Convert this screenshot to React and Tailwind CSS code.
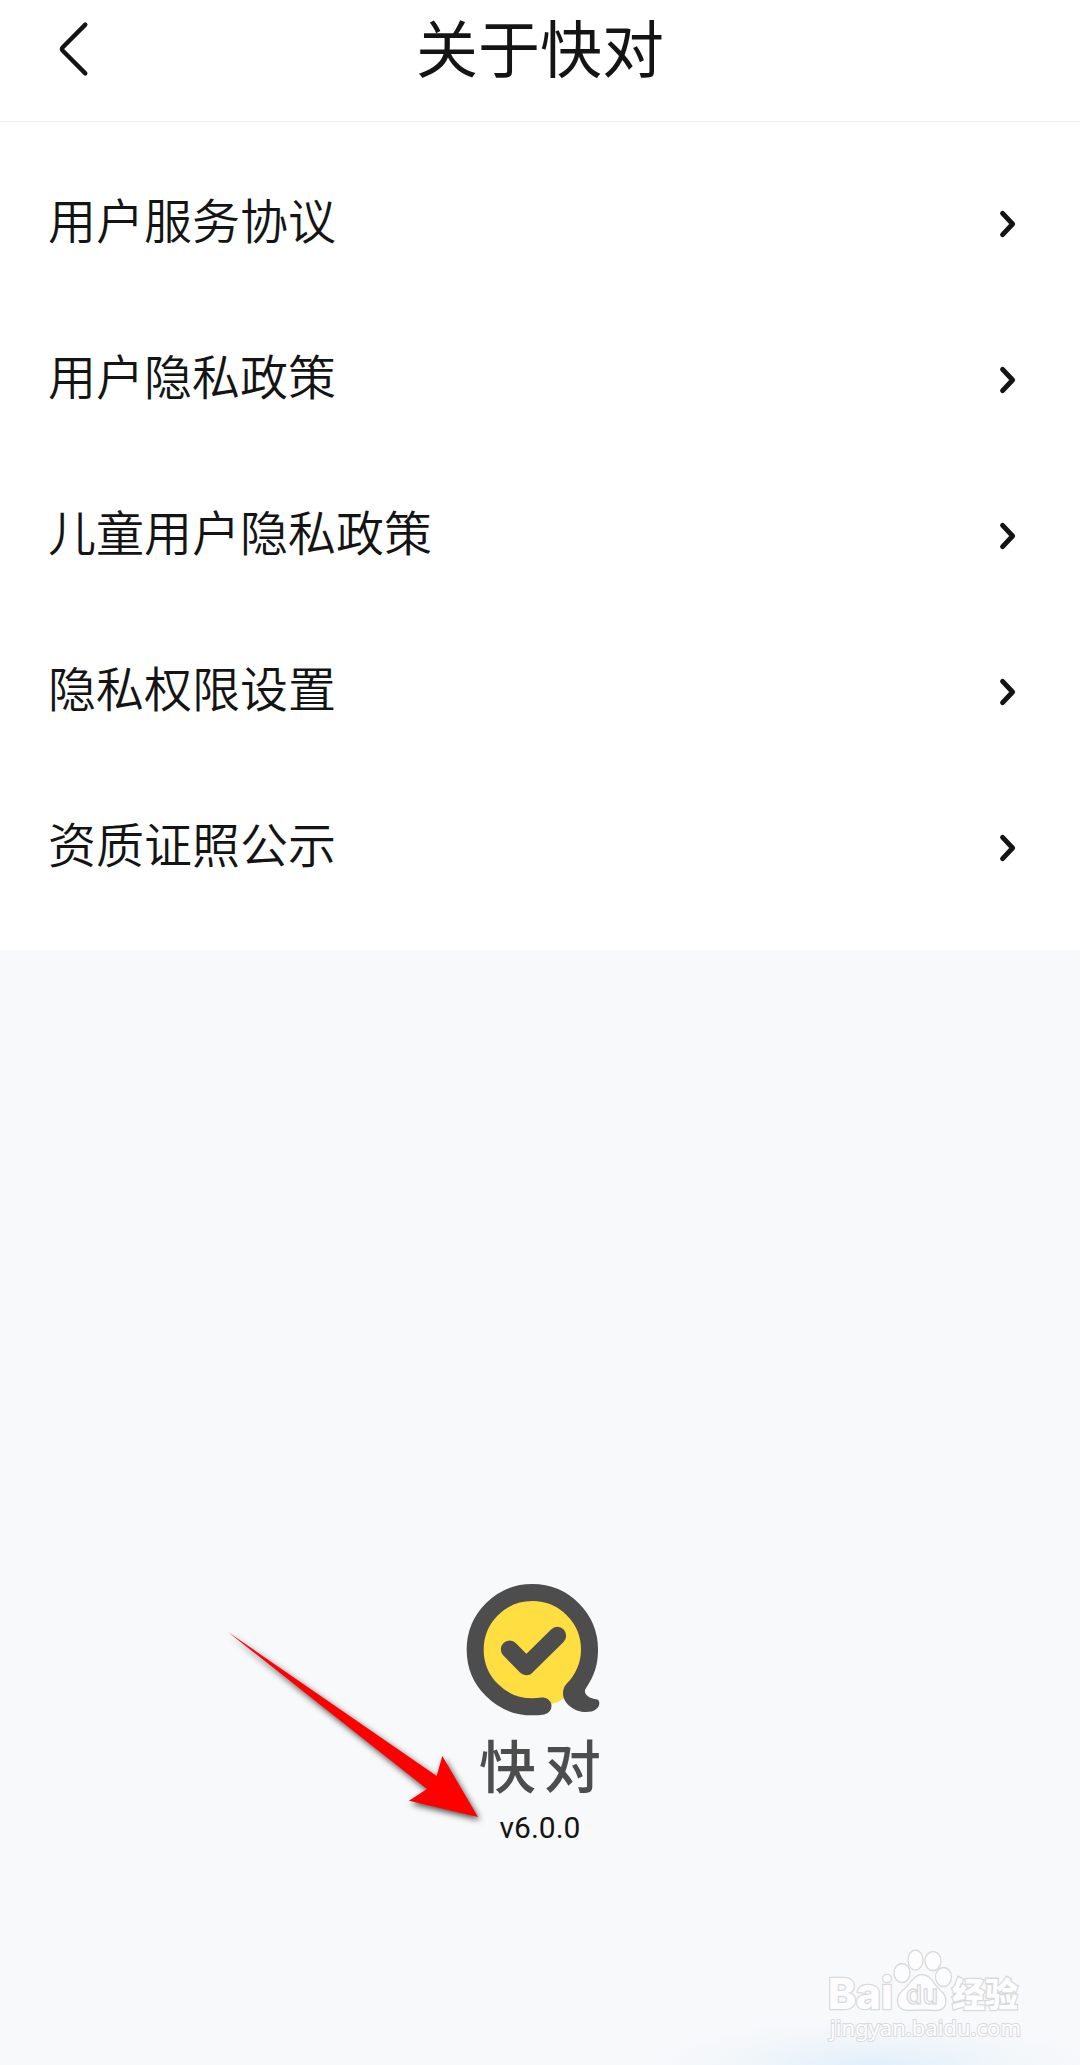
const links = [
  "用户服务协议",
  "用户隐私政策",
  "儿童用户隐私政策",
  "隐私权限设置",
  "资质证照公示",
];

export default function App() {
  return (
    <div className="relative flex h-[2065px] w-[1080px] flex-col overflow-hidden bg-[#f8f9fb] font-['Noto_Sans_CJK_SC',sans-serif] text-[#141414]">
      <Header title="关于快对" />

      <ul className="flex flex-col bg-white py-6">
        {links.map((text) => (
          <LinkRow key={text} text={text} />
        ))}
      </ul>

      <main className="flex flex-1 flex-col items-center pt-[633px]">
        <Logo />
        <div className="mt-[13px] flex h-[68px] items-center gap-[8px] text-[57px] leading-none font-medium text-[#4d4d4d]">
          <span>快</span>
          <span>对</span>
        </div>
        <p className="mt-[13px] font-['Roboto',sans-serif] text-[30px] leading-9">v6.0.0</p>
      </main>

      {/* glow at the bottom edge */}
      <div className="absolute bottom-0 left-[643px] h-[48px] w-[460px] bg-[radial-gradient(ellipse_at_bottom,#e2effb_0%,#f1f6fa_40%,#f8f9fb_70%)]" />

      <Pointer />
      <Watermark />
    </div>
  );
}

const Header = ({ title }) => (
  <header className="grid h-[122px] grid-cols-[1fr_auto_1fr] items-start border-b border-[#eeeeee] bg-white">
    <button className="mt-[20px] ml-[57px] w-8" aria-label="返回">
      <svg viewBox="0 0 32 58" className="block h-[58px] w-8" fill="none" stroke="currentColor" strokeWidth="4.4" strokeLinecap="round" strokeLinejoin="round">
        <path d="M28.3 4.6 5.8 27.2Q4.2 29 5.8 30.8L28.3 53.4" />
      </svg>
    </button>
    <h1 className="mt-[1px] text-[62px] leading-[90px]">{title}</h1>
  </header>
);

const LinkRow = ({ text }) => (
  <li className="flex h-[156px] items-center justify-between pr-[62px] pl-12">
    <span className="pb-[13px] text-[48px] leading-[72px] font-[350]">{text}</span>
    <svg viewBox="0 0 20 30" className="h-[30px] w-5" fill="none" stroke="currentColor" strokeWidth="5" strokeLinecap="round" strokeLinejoin="round">
      <path d="M4.6 4.4 14.6 15 4.6 25.6" />
    </svg>
  </li>
);

const Logo = () => (
  <svg viewBox="78 69 402 399" className="mr-[14px] h-[133px] w-[134px] shrink-0">
    <circle cx="277" cy="269" r="152" fill="#ffde42" />
    <path d="M277 400 335 432Q355 426 374 415L400 360Z" fill="#ffde42" />
    <path d="M309 438Q293 440.5 277 440.5A171.5 171.5 0 1 1 448.5 269" fill="none" stroke="#4d4d4d" strokeWidth="51" strokeLinecap="round" />
    <path d="M423 262V269C423 308 407 343 381 370Q368 384 369 402C371 433 405 456 438 456C462 456 478 446 478 429Q478 419 468 418C448 415 432 404 435 390C449 365 474 335 474 269V262Z" fill="#4d4d4d" />
    <path d="M209 268 259 319 352 227" fill="none" stroke="#4d4d4d" strokeWidth="53" strokeLinecap="round" strokeLinejoin="round" />
  </svg>
);

const Pointer = () => (
  <svg viewBox="0 0 270 200" className="absolute top-[1625px] left-[220px] h-[200px] w-[270px] drop-shadow-[2px_3px_3px_rgba(0,0,0,0.7)]">
    <path d="M8 7 216.7 151 222.3 131 258 192 189 175.7 207 164Z" fill="#ff0000" />
  </svg>
);

const Watermark = () => (
  <svg viewBox="0 0 220 110" className="absolute top-[1940px] left-[815px] h-[110px] w-[220px]" fill="#fdfdfe" stroke="#d9dadc" strokeWidth="1.3">
    <g fontFamily="Inter, Noto Sans CJK SC, sans-serif" fontWeight="800" paintOrder="stroke" strokeWidth="2.6">
      <text x="13" y="69" fontSize="43" textLength="65" lengthAdjust="spacingAndGlyphs">Bai</text>
      <text x="137" y="67" fontSize="34" fontFamily="Noto Sans CJK SC, sans-serif" textLength="66" lengthAdjust="spacingAndGlyphs">经验</text>
    </g>
    <ellipse cx="87" cy="33" rx="8" ry="9.5" />
    <ellipse cx="100.5" cy="20" rx="7.5" ry="10" />
    <ellipse cx="118" cy="21" rx="8" ry="9.5" />
    <ellipse cx="128.5" cy="37" rx="8" ry="9.5" />
    <path d="M107 34.5C116 34.5 119 45 125 50C134 57 133 71 120 70.5C113 70 100 70 93 70.5C80 70 80 57 88 50C95 45 98 34.5 107 34.5Z" />
    <text x="91" y="64" fontSize="26" fontFamily="Inter, sans-serif" fontWeight="500" textLength="32" lengthAdjust="spacingAndGlyphs">du</text>
    <text x="15" y="96" fontSize="22" fontFamily="Noto Sans, sans-serif" fontWeight="400" paintOrder="stroke" strokeWidth="2" textLength="191" lengthAdjust="spacingAndGlyphs">jingyan.baidu.com</text>
  </svg>
);
